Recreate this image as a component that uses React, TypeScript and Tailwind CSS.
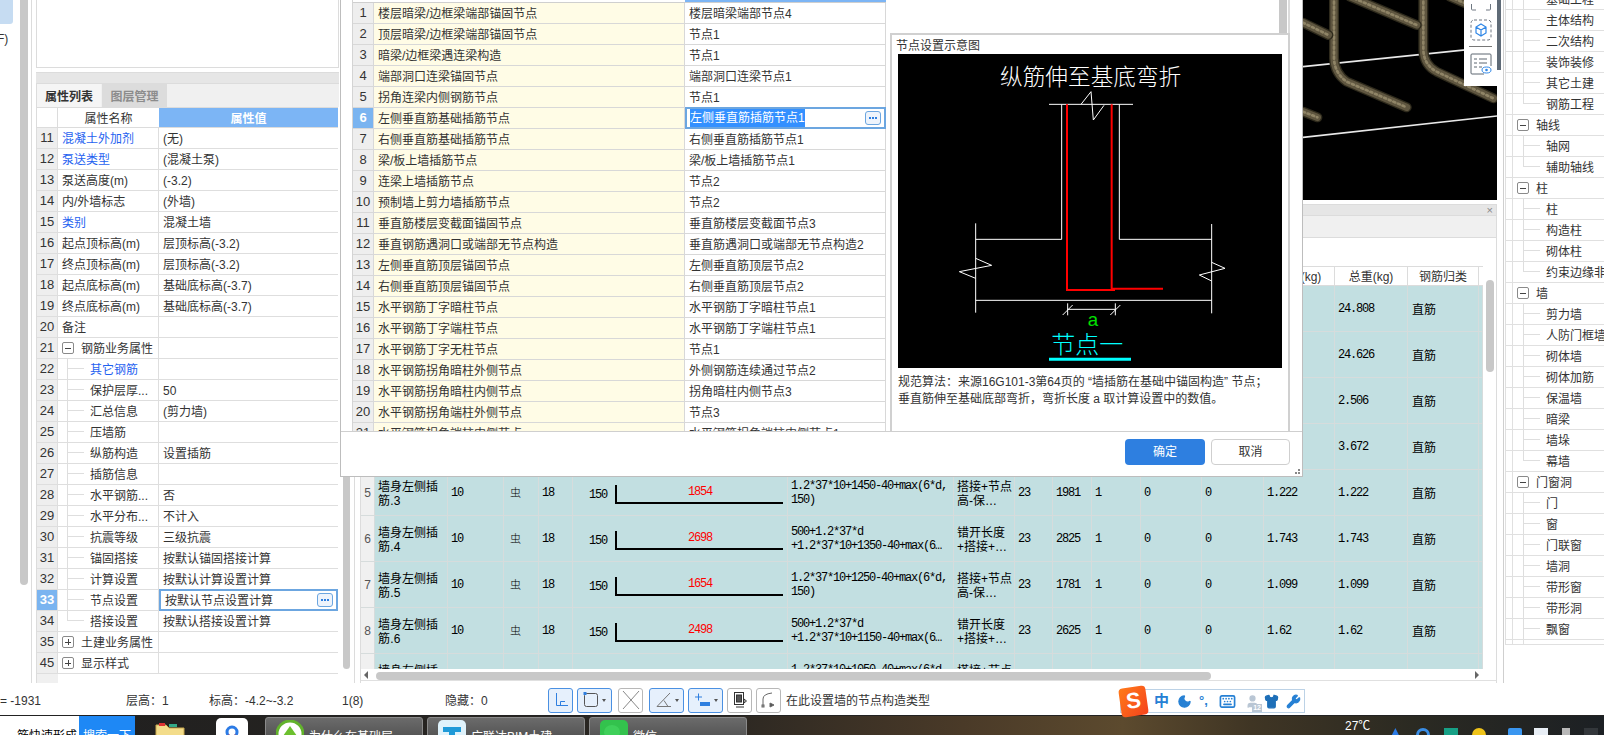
import { Moon, Keyboard, Shirt, Wrench, User } from 'lucide-react'

const monoClass = "[font-family:'Liberation_Mono','Noto_Sans_CJK_SC',monospace] text-[12px] tracking-[-1.2px]"

const properties = [
  { n: 11, name: '混凝土外加剂', value: '(无)', blue: true },
  { n: 12, name: '泵送类型', value: '(混凝土泵)', blue: true },
  { n: 13, name: '泵送高度(m)', value: '(-3.2)' },
  { n: 14, name: '内/外墙标志', value: '(外墙)' },
  { n: 15, name: '类别', value: '混凝土墙', blue: true },
  { n: 16, name: '起点顶标高(m)', value: '层顶标高(-3.2)' },
  { n: 17, name: '终点顶标高(m)', value: '层顶标高(-3.2)' },
  { n: 18, name: '起点底标高(m)', value: '基础底标高(-3.7)' },
  { n: 19, name: '终点底标高(m)', value: '基础底标高(-3.7)' },
  { n: 20, name: '备注', value: '' },
  { n: 21, name: '钢筋业务属性', value: '', section: '-' },
  { n: 22, name: '其它钢筋', value: '', child: true, blue: true },
  { n: 23, name: '保护层厚...', value: '50', child: true },
  { n: 24, name: '汇总信息', value: '(剪力墙)', child: true },
  { n: 25, name: '压墙筋', value: '', child: true },
  { n: 26, name: '纵筋构造', value: '设置插筋', child: true },
  { n: 27, name: '插筋信息', value: '', child: true },
  { n: 28, name: '水平钢筋...', value: '否', child: true },
  { n: 29, name: '水平分布...', value: '不计入', child: true },
  { n: 30, name: '抗震等级', value: '三级抗震', child: true },
  { n: 31, name: '锚固搭接', value: '按默认锚固搭接计算', child: true },
  { n: 32, name: '计算设置', value: '按默认计算设置计算', child: true },
  { n: 33, name: '节点设置', value: '按默认节点设置计算', child: true, selected: true },
  { n: 34, name: '搭接设置', value: '按默认搭接设置计算', child: true, last: true },
  { n: 35, name: '土建业务属性', value: '', section: '+' },
  { n: 45, name: '显示样式', value: '', section: '+' },
]

const nodes = [
  ['楼层暗梁/边框梁端部锚固节点', '楼层暗梁端部节点4'],
  ['顶层暗梁/边框梁端部锚固节点', '节点1'],
  ['暗梁/边框梁遇连梁构造', '节点1'],
  ['端部洞口连梁锚固节点', '端部洞口连梁节点1'],
  ['拐角连梁内侧钢筋节点', '节点1'],
  ['左侧垂直筋基础插筋节点', '左侧垂直筋插筋节点1'],
  ['右侧垂直筋基础插筋节点', '右侧垂直筋插筋节点1'],
  ['梁/板上墙插筋节点', '梁/板上墙插筋节点1'],
  ['连梁上墙插筋节点', '节点2'],
  ['预制墙上剪力墙插筋节点', '节点2'],
  ['垂直筋楼层变截面锚固节点', '垂直筋楼层变截面节点3'],
  ['垂直钢筋遇洞口或端部无节点构造', '垂直筋遇洞口或端部无节点构造2'],
  ['左侧垂直筋顶层锚固节点', '左侧垂直筋顶层节点2'],
  ['右侧垂直筋顶层锚固节点', '右侧垂直筋顶层节点2'],
  ['水平钢筋丁字暗柱节点', '水平钢筋丁字暗柱节点1'],
  ['水平钢筋丁字端柱节点', '水平钢筋丁字端柱节点1'],
  ['水平钢筋丁字无柱节点', '节点1'],
  ['水平钢筋拐角暗柱外侧节点', '外侧钢筋连续通过节点2'],
  ['水平钢筋拐角暗柱内侧节点', '拐角暗柱内侧节点3'],
  ['水平钢筋拐角端柱外侧节点', '节点3'],
  ['水平钢筋拐角端柱内侧节点', '水平钢筋拐角端柱内侧节点1'],
]

const rebarRows = [
  { n: 1, weight: '24.808' },
  { n: 2, weight: '24.626' },
  { n: 3, weight: '2.506' },
  { n: 4, weight: '3.672' },
  { n: 5, name: '筋.3', shape: '1854', f1: '1.2*37*10+1450-40+max(6*d,', f2: '150)', d1: '搭接+节点', d2: '高-保…', len: '1981', weight: '1.222' },
  { n: 6, name: '筋.4', shape: '2698', f1: '500+1.2*37*d', f2: '+1.2*37*10+1350-40+max(6…', d1: '错开长度', d2: '+搭接+…', len: '2825', weight: '1.743' },
  { n: 7, name: '筋.5', shape: '1654', f1: '1.2*37*10+1250-40+max(6*d,', f2: '150)', d1: '搭接+节点', d2: '高-保…', len: '1781', weight: '1.099' },
  { n: 8, name: '筋.6', shape: '2498', f1: '500+1.2*37*d', f2: '+1.2*37*10+1150-40+max(6…', d1: '错开长度', d2: '+搭接+…', len: '2625', weight: '1.62' },
  { n: 9, name: '筋.7', shape: '1454', f1: '1.2*37*10+1050-40+max(6*d,', f2: '150)', d1: '搭接+节点', d2: '高-保…', len: '1581', weight: '0.976' },
]

const tree = [
  { label: '基础工程' },
  { label: '主体结构' },
  { label: '二次结构' },
  { label: '装饰装修' },
  { label: '其它土建' },
  { label: '钢筋工程', last: true },
  { label: '轴线', section: true },
  { label: '轴网' },
  { label: '辅助轴线', last: true },
  { label: '柱', section: true },
  { label: '柱' },
  { label: '构造柱' },
  { label: '砌体柱' },
  { label: '约束边缘非阴影区', last: true },
  { label: '墙', section: true },
  { label: '剪力墙' },
  { label: '人防门框墙' },
  { label: '砌体墙' },
  { label: '砌体加筋' },
  { label: '保温墙' },
  { label: '暗梁' },
  { label: '墙垛' },
  { label: '幕墙', last: true },
  { label: '门窗洞', section: true },
  { label: '门' },
  { label: '窗' },
  { label: '门联窗' },
  { label: '墙洞' },
  { label: '带形窗' },
  { label: '带形洞' },
  { label: '飘窗' },
]

const gridCols =
  'grid grid-cols-[14px_73px_56px_35px_34px_215px_166px_61px_38px_39px_49px_61px_62px_71px_73px_71px_4px]'

function Connector({ last, className }: { last?: boolean; className: string }) {
  return (
    <span className={`flex flex-col self-stretch shrink-0 ${className}`}>
      <span className="h-[10px] border-l border-b border-[#dedede]" />
      <span className={`flex-1 ${last ? '' : 'border-l border-[#dedede]'}`} />
    </span>
  )
}

function ToggleBox({ sign }: { sign: string }) {
  return (
    <span className="w-[12px] h-[12px] shrink-0 rounded-[2px] border border-[#8a8a8a] bg-white flex items-center justify-center relative">
      <span className="w-[6px] h-px bg-[#444]" />
      {sign === '+' && <span className="absolute w-px h-[6px] bg-[#444]" />}
    </span>
  )
}

function MoreButton() {
  return (
    <span className="w-[16px] h-[14px] rounded-[3px] border border-[#6ca6e0] bg-[#eef4fc] flex items-center justify-center gap-px shrink-0">
      <span className="w-[2px] h-[2px] bg-[#2e7fe0]" />
      <span className="w-[2px] h-[2px] bg-[#2e7fe0]" />
      <span className="w-[2px] h-[2px] bg-[#2e7fe0]" />
    </span>
  )
}

function PropertyPanel() {
  return (
    <div className="w-[303px] shrink-0 flex flex-col">
      <div className="h-[68px] border border-t-0 border-[#dcdcdc] bg-white" />
      <div className="mt-[4px] h-[12px] bg-[#e6e6e6] border-y border-[#dcdcdc]" />
      <div className="h-[23px] bg-[#f0f0f0] border-l border-[#dcdcdc] flex items-end text-[12px]">
        <span className="w-[64px] h-[23px] pt-[2px] bg-[#f5f5f5] font-bold text-[#333] flex items-center justify-center">属性列表</span>
        <span className="ml-px w-[65px] h-[23px] pt-[2px] bg-[#dcdcdc] font-bold text-[#8c8c8c] flex items-center justify-center">图层管理</span>
      </div>
      <div className="flex-1 flex flex-col border-l border-[#dcdcdc] text-[12px] text-[#333]">
        <div className="flex h-[21px] w-[301px] border-b border-t border-[#dcdcdc]">
          <span className="w-[21px] border-r border-[#dcdcdc]" />
          <span className="w-[101px] pt-[2px] flex items-center justify-center">属性名称</span>
          <span className="flex-1 pt-[2px] bg-[#7cb5f5] text-white font-bold flex items-center justify-center">属性值</span>
        </div>
        {properties.map((p) => (
          <div key={p.n} className="flex h-[21px] w-[301px] border-b border-[#dedede] items-center">
            <span
              className={`w-[21px] h-full border-r border-[#dedede] flex items-center justify-center text-[13px] ${
                p.selected ? 'bg-[#7ab4f0] text-white font-bold' : 'bg-[#eeeeee]'
              }`}
            >
              {p.n}
            </span>
            <span className="w-[101px] h-full border-r border-[#dedede] flex items-center overflow-hidden whitespace-nowrap">
              {p.section && (
                <span className="ml-[4px] mr-[7px] flex">
                  <ToggleBox sign={p.section} />
                </span>
              )}
              {p.child && <Connector last={p.last} className="ml-[9px] mr-[6px] w-[17px]" />}
              <span className={`pt-[2px] ${p.blue ? 'text-[#1f62f0]' : ''} ${!p.section && !p.child ? 'pl-[4px]' : ''}`}>{p.name}</span>
            </span>
            {p.selected ? (
              <span className="flex-1 h-[22px] border-2 border-[#6ca6e0] flex items-center pl-[4px] pr-[3px] justify-between bg-white">
                <span className="pt-[2px]">{p.value}</span>
                <MoreButton />
              </span>
            ) : (
              <span className="flex-1 pl-[4px] pt-[2px] whitespace-nowrap">{p.value}</span>
            )}
          </div>
        ))}
        <div className="flex-1 w-[21px] bg-[#f0f0f0]" />
      </div>
    </div>
  )
}

function RebarView() {
  const bars = [
    'M222 -10 L222 175 Q224 220 260 245 L440 322',
    'M490 -10 L490 150 Q492 195 530 215 L700 295',
    'M270 -10 L470 75',
    'M129 68 L205 105',
    'M129 335 L172 352',
    'M570 -10 L620 12',
  ]
  return (
    <div className="relative h-[200px] bg-black flex justify-end overflow-hidden">
      <svg width="194" height="200" viewBox="129 0 582 600" className="shrink-0">
        <line x1="129" y1="200" x2="711" y2="140" stroke="#e8e8e8" strokeWidth="5" />
        <line x1="129" y1="412" x2="711" y2="348" stroke="#e8e8e8" strokeWidth="5" />
        {bars.map((d) => (
          <g key={d} fill="none" strokeLinecap="round">
            <path d={d} stroke="#2e2a1c" strokeWidth="30" />
            <path d={d} stroke="#5f5640" strokeWidth="22" />
            <path d={d} stroke="#8f8466" strokeWidth="8" strokeDasharray="6 9" />
          </g>
        ))}
      </svg>
      <div className="absolute right-0 top-0 w-[33px] h-[86px] bg-white flex flex-col items-center">
        <svg width="22" height="13" viewBox="0 0 22 13" fill="none" stroke="#6e7781" strokeWidth="1">
          <path d="M1.5 4V9a1 1 0 0 0 1 1H6M16 10h3.5a1 1 0 0 0 1-1V4" />
        </svg>
        <svg width="22" height="22" viewBox="0 0 22 22" fill="none" className="mt-[6px]">
          <rect x="1" y="1" width="20" height="20" rx="3" stroke="#6e7781" strokeDasharray="3 2" />
          <path d="M11 5l5 3v6l-5 3-5-3V8zM6 8l5 3 5-3M11 11v6" stroke="#2e86e6" strokeWidth="1.2" />
        </svg>
        <span className="w-[23px] h-px bg-[#777] mt-[5px]" />
        <svg width="22" height="22" viewBox="0 0 22 22" fill="none" className="mt-[6px]">
          <path d="M14 21H2a1 1 0 0 1-1-1V2a1 1 0 0 1 1-1h18a1 1 0 0 1 1 1v11" stroke="#5c6670" />
          <path d="M4 6h3M9 6h8M4 10h3M9 10h8M4 14h3M9 14h3" stroke="#5c6670" />
          <ellipse cx="16.5" cy="17" rx="4.5" ry="3" stroke="#2e86e6" />
          <circle cx="16.5" cy="17" r="1.3" fill="#2e86e6" />
        </svg>
      </div>
    </div>
  )
}

function RebarTable() {
  const headers = ['', '', '', '', '', '', '', '', '', '', '', '', '', '单重(kg)', '总重(kg)', '钢筋归类']
  const cell = 'border-r border-[#d6dcdc] overflow-hidden whitespace-nowrap'
  return (
    <div className="w-[1122px] shrink-0">
      <div className={`${gridCols} h-[20px] bg-white border-y border-[#dcdcdc] text-[12px] text-[#333]`}>
        {headers.map((h, i) => (
          <span key={i} className="border-r border-[#dcdcdc] pt-[2px] flex items-center justify-center overflow-hidden whitespace-nowrap">
            {h}
          </span>
        ))}
      </div>
      <div className="h-[383px] overflow-hidden text-black text-[12px] leading-[14px]">
        {rebarRows.map((r) => (
          <div key={r.n} className={`${gridCols} h-[46px] bg-[#c2dfe1] border-b border-[#d6dcdc] shrink-0`}>
            <span className={`${cell} bg-[#f0f0f0] flex items-center justify-center text-[#555]`}>{r.name && r.n}</span>
            <span className={`${cell} flex flex-col justify-center pl-[3px] pt-[2px]`}>
              {r.name && (
                <>
                  <span>墙身左侧插</span>
                  <span className="tracking-[0.2px]">{r.name}</span>
                </>
              )}
            </span>
            <span className={`${cell} ${monoClass} flex items-center pl-[3px]`}>{r.name && '10'}</span>
            <span className={`${cell} flex items-center pl-[6px] text-[11px] font-light`}>{r.name && '虫'}</span>
            <span className={`${cell} ${monoClass} flex items-center pl-[3px]`}>{r.name && '18'}</span>
            <span className={`${cell} flex items-center pl-[16px]`}>
              {r.name && (
                <>
                  <span className={`${monoClass} mt-[4px]`}>150</span>
                  <span className="ml-[8px] mt-[4px] w-[168px] h-[19px] border-l-2 border-b-2 border-black">
                    <span className={`${monoClass} block text-center text-[#ff0000]`}>{r.shape}</span>
                  </span>
                </>
              )}
            </span>
            <span className={`${cell} ${monoClass} flex flex-col justify-center pl-[3px]`}>
              <span>{r.f1}</span>
              <span>{r.f2}</span>
            </span>
            <span className={`${cell} flex flex-col justify-center pl-[3px] pt-[2px]`}>
              <span>{r.d1}</span>
              <span>{r.d2}</span>
            </span>
            <span className={`${cell} ${monoClass} flex items-center pl-[3px]`}>{r.name && '23'}</span>
            <span className={`${cell} ${monoClass} flex items-center pl-[3px]`}>{r.len}</span>
            <span className={`${cell} ${monoClass} flex items-center pl-[3px]`}>{r.name && '1'}</span>
            <span className={`${cell} ${monoClass} flex items-center pl-[3px]`}>{r.name && '0'}</span>
            <span className={`${cell} ${monoClass} flex items-center pl-[3px]`}>{r.name && '0'}</span>
            <span className={`${cell} ${monoClass} flex items-center pl-[3px]`}>{r.name && r.weight}</span>
            <span className={`${cell} ${monoClass} flex items-center pl-[3px]`}>{r.weight}</span>
            <span className={`${cell} flex items-center pl-[4px] pt-[2px]`}>直筋</span>
            <span className={cell} />
          </div>
        ))}
      </div>
    </div>
  )
}

function CenterPanel() {
  return (
    <div className="w-[1148px] shrink-0 border-l border-[#dcdcdc] pl-[5px] flex flex-col">
      <div className="flex">
        <div className="w-[1137px]">
          <RebarView />
        </div>
        <div className="w-[4px] h-[70px] bg-[#5f6b77]" />
      </div>
      <div className="mt-[4px] w-[1137px] flex-1 border-r border-l border-[#dcdcdc] flex flex-col overflow-hidden">
        <div className="h-[12px] shrink-0 bg-[#e6e6e6] border-y border-[#dcdcdc] flex justify-end items-center pr-[3px] text-[#888] text-[11px]">×</div>
        <div className="h-[22px] shrink-0 bg-[#f0f0f0] border-b border-[#dcdcdc]" />
        <div className="h-[28px] shrink-0 bg-white" />
        <div className="flex">
          <RebarTable />
          <div className="ml-[3px] mt-[14px] w-[8px] h-[92px] rounded-[4px] bg-[#c8c8c8]" />
        </div>
        <div className="h-[11px] shrink-0 w-[1122px] bg-white flex items-center pl-[3px] pr-[4px]">
          <span className="w-0 h-0 border-y-[4px] border-y-transparent border-r-[4px] border-r-[#666]" />
          <span className="ml-[8px] mt-[3px] w-[835px] h-[8px] rounded-[4px] bg-[#c8c8c8]" />
          <span className="ml-auto w-0 h-0 border-y-[4px] border-y-transparent border-l-[4px] border-l-[#666]" />
        </div>
        <div className="flex-1 border-t border-[#e0e0e0]" />
      </div>
    </div>
  )
}

function TreePanel() {
  return (
    <div className="w-[103px] shrink-0 ml-px border-l border-[#cfcfcf] pl-[1px] overflow-hidden text-[12px] text-[#333]">
      <div className="-mt-[11px]">
        {tree.map((t, i) => (
          <div key={i} className="h-[21px] flex items-center border-b border-[#e0e0e0] whitespace-nowrap">
            <span className="w-[8px] self-stretch border-x border-[#e0e0e0] shrink-0" />
            {t.section ? (
              <>
                <span className="ml-[4px] mr-[7px] flex">
                  <ToggleBox sign="-" />
                </span>
                <span className="pt-[2px]">{t.label}</span>
              </>
            ) : (
              <>
                <Connector last={t.last} className="ml-[10px] mr-[6px] w-[17px]" />
                <span className="pt-[2px]">{t.label}</span>
              </>
            )}
          </div>
        ))}
        <div className="h-[5px] flex border-b border-[#e0e0e0]">
          <span className="w-[8px] border-x border-[#e0e0e0]" />
          <span className="ml-[10px] border-l border-[#e0e0e0]" />
        </div>
      </div>
    </div>
  )
}

function NodeDiagram() {
  return (
    <svg width="384" height="314" viewBox="54 102 1152 942" className="block bg-black" fill="none">
      <text x="632" y="195" textAnchor="middle" fontSize="68" fontWeight="300" fill="#fff" stroke="none">纵筋伸至基底弯折</text>
      <g stroke="#fff" strokeWidth="3">
        <path d="M507 253H759" />
        <path d="M545 253V658H287" />
        <path d="M718 253V658H995" />
        <path d="M287 610V878M995 612V880M287 841H995" />
        <path d="M603 253L633 215L640 300L672 256" />
        <path d="M287 715L335 736L238 755L287 775" />
        <path d="M995 727L1035 745L958 765L995 783" />
        <path d="M563 868H706M563 850V886M706 850V886M548 885L578 855M691 885L721 855" />
      </g>
      <path d="M561 253V810H705" stroke="#ff0000" strokeWidth="6" />
      <path d="M695 253V806H849" stroke="#ff0000" strokeWidth="6" />
      <text x="639" y="918" textAnchor="middle" fontSize="56" fontWeight="300" fill="#00e000" stroke="none">a</text>
      <text x="622" y="998" textAnchor="middle" fontSize="72" fontWeight="300" fill="#00ffff" stroke="none">节点一</text>
      <path d="M507 1018H753" stroke="#00ffff" strokeWidth="9" />
    </svg>
  )
}

function NodeDialog() {
  return (
    <div className="absolute left-[340px] top-0 w-[963px] h-[477px] bg-white border-x border-b border-[#bdbdbd] flex flex-col text-[12px] text-[#333]">
      <div className="h-[432px] flex pl-[11px] border-b border-[#cfcfcf]">
        <div className="w-[534px] shrink-0 overflow-hidden border-l border-[#d4d4d4]">
          <div className="flex h-[3px] border-b border-[#cfcfcf]">
            <span className="w-[332px]" />
            <span className="flex-1 bg-[#7cb5f5]" />
          </div>
          {nodes.map(([name, value], i) => {
            const active = i === 5
            return (
              <div key={i} className="flex h-[21px] border-b border-[#d8d8d8] items-center">
                <span
                  className={`w-[21px] h-full border-r border-[#d8d8d8] flex items-center justify-center text-[13px] ${
                    active ? 'bg-[#7ab4f0] text-white font-bold' : 'bg-[#eeeeee]'
                  }`}
                >
                  {i + 1}
                </span>
                <span className="w-[311px] h-full pt-[2px] bg-[#fffce6] border-r border-[#d8d8d8] pl-[4px] flex items-center">{name}</span>
                {active ? (
                  <span className="flex-1 h-[22px] border-2 border-[#6ca6e0] pl-[3px] pr-[3px] flex items-center justify-between">
                    <span className="bg-[#3390ff] text-white">{value}</span>
                    <MoreButton />
                  </span>
                ) : (
                  <span className="flex-1 h-full pt-[2px] border-r border-[#d8d8d8] pl-[4px] flex items-center">{value}</span>
                )}
              </div>
            )
          })}
        </div>
        <div className="ml-[4px] w-[400px] shrink-0 flex flex-col">
          <div className="h-[33px] flex justify-end">
            <span className="w-[8px] h-full bg-[#c8c8c8]" />
            <span className="ml-[1px] w-[2px] h-full bg-[#dcdcdc]" />
          </div>
          <div className="flex-1 border-2 border-b-0 border-[#d0d0d0] pl-[6px] flex flex-col">
            <div className="h-[19px] -ml-[2px] leading-[22px]">节点设置示意图</div>
            <NodeDiagram />
            <p className="mt-[6px] leading-[17px] whitespace-nowrap">
              规范算法：来源16G101-3第64页的 “墙插筋在基础中锚固构造” 节点；
              <br />
              垂直筋伸至基础底部弯折，弯折长度 a 取计算设置中的数值。
            </p>
          </div>
        </div>
      </div>
      <div className="relative flex justify-end gap-[6px] pr-[12px] pt-[7px]">
        <button className="w-[80px] h-[26px] rounded-[4px] bg-[#2e7fe0] text-white">确定</button>
        <button className="w-[79px] h-[26px] rounded-[4px] border border-[#cfcfcf] bg-white">取消</button>
        <span className="absolute right-[2px] bottom-[-9px] grid grid-cols-3 gap-px w-[8px]">
          <span />
          <span />
          <span className="h-[2px] w-[2px] bg-[#888]" />
          <span />
          <span className="h-[2px] w-[2px] bg-[#888]" />
          <span className="h-[2px] w-[2px] bg-[#888]" />
        </span>
      </div>
    </div>
  )
}

function ToolButton({ active, wide, className = '', children }: { active?: boolean; wide?: boolean; className?: string; children: React.ReactNode }) {
  return (
    <span
      className={`h-[25px] ${wide ? 'w-[35px]' : 'w-[25px]'} shrink-0 rounded-[3px] border flex items-center justify-center gap-[3px] ${
        active ? 'bg-[#e6f0fc] border-[#4a90e2]' : 'bg-white border-[#b8b8b8]'
      } ${className}`}
    >
      {children}
      {wide && <span className="w-0 h-0 border-x-[2px] border-x-transparent border-t-[3px] border-t-[#555]" />}
    </span>
  )
}

function StatusBar() {
  return (
    <div className="h-[32px] shrink-0 bg-white flex items-center pt-[2px] text-[12px] text-[#333]">
      <span className="w-[126px] shrink-0 pt-[2px]">= -1931</span>
      <span className="w-[83px] shrink-0 pt-[2px]">层高：1</span>
      <span className="w-[133px] shrink-0 pt-[2px]">标高：-4.2~-3.2</span>
      <span className="w-[103px] shrink-0 pt-[2px]">1(8)</span>
      <span className="w-[103px] shrink-0 pt-[2px]">隐藏：0</span>
      <div className="flex gap-[4px] shrink-0">
        <ToolButton active>
          <svg width="16" height="16" viewBox="0 0 16 16" fill="none" stroke="#2e7fe0">
            <path d="M3.5 1V13.5H15M7.5 13.5V9.5H12" />
          </svg>
        </ToolButton>
        <ToolButton active wide>
          <svg width="16" height="18" viewBox="0 0 16 18" fill="none" stroke="#555">
            <rect x="1.5" y="2.5" width="13" height="13" rx="2" />
            <rect x="0.5" y="1" width="3" height="3" fill="#2e7fe0" stroke="none" />
          </svg>
        </ToolButton>
        <ToolButton className="ml-[2px]">
          <svg width="18" height="20" viewBox="0 0 18 20" fill="none" stroke="#888">
            <path d="M1 1L17 19M17 1L1 19" />
          </svg>
        </ToolButton>
        <ToolButton active wide className="ml-[2px]">
          <svg width="17" height="17" viewBox="0 0 17 17" fill="none" stroke="#777">
            <path d="M15 1L2 14.5H16M9 8.5L13 14.5" />
          </svg>
        </ToolButton>
        <ToolButton active wide>
          <svg width="17" height="17" viewBox="0 0 17 17" fill="none">
            <path d="M1 5H8M4.5 1.5V8.5" stroke="#2e7fe0" />
            <rect x="6" y="10" width="10" height="4" fill="#2e7fe0" />
          </svg>
        </ToolButton>
        <ToolButton>
          <svg width="16" height="18" viewBox="0 0 16 18" fill="none" stroke="#333">
            <rect x="2.5" y="1.5" width="9" height="12" />
            <rect x="4.5" y="4" width="5" height="7" fill="#555" />
            <path d="M4 16H12M12 8l2.5 2-2.5 2z" />
          </svg>
        </ToolButton>
        <ToolButton>
          <svg width="16" height="18" viewBox="0 0 16 18" fill="none" stroke="#666">
            <path d="M2 16V8Q2 3 11 2" />
            <rect x="1" y="14" width="2" height="2" />
            <path d="M9 12l4 2-4 2z" fill="#555" />
          </svg>
        </ToolButton>
      </div>
      <span className="ml-[5px] pt-[2px] whitespace-nowrap">在此设置墙的节点构造类型</span>
    </div>
  )
}

function Taskbar() {
  const windows = [
    {
      label: '为什么在基础层…',
      icon: (
        <svg width="28" height="28" viewBox="0 0 28 28">
          <circle cx="14" cy="14" r="13" fill="#fff" stroke="#62b32c" strokeWidth="3" />
          <path d="M14 6l7 10H7z" fill="#6cc02e" />
        </svg>
      ),
    },
    {
      label: '广联达BIM土建…',
      icon: (
        <svg width="28" height="28" viewBox="0 0 28 28">
          <rect width="28" height="28" rx="5" fill="#dff2fb" />
          <path d="M5 7H23V12H17V22H11V12H5z" fill="#1f9ad8" />
        </svg>
      ),
    },
    {
      label: '微信',
      icon: (
        <svg width="28" height="28" viewBox="0 0 28 28">
          <rect width="28" height="28" rx="5" fill="#33c24d" />
          <ellipse cx="12" cy="12" rx="8" ry="7" fill="#3fd05a" />
          <ellipse cx="20" cy="23" rx="7" ry="6" fill="#f2f2f2" />
        </svg>
      ),
    },
  ]
  return (
    <div className="h-[20px] shrink-0 overflow-hidden flex items-start border-t border-[#222] bg-[linear-gradient(90deg,#1f1f1f_0%,#2b2722_45%,#4a3a28_60%,#5c4a2e_70%,#3f3524_78%,#2b2a22_88%,#1c2024_100%)] text-[12px]">
      <span className="w-[79px] h-[40px] bg-white text-black pt-[13px] pl-[0px] leading-[14px] whitespace-nowrap overflow-hidden shrink-0 text-right pr-[2px]">筋快速形成</span>
      <span className="w-[56px] h-[40px] bg-[#1e88f5] text-white pt-[13px] leading-[14px] text-center shrink-0">搜索一下</span>
      <div className="ml-[20px] w-[30px] mt-[6px] shrink-0">
        <svg width="30" height="24" viewBox="0 0 30 24">
          <path d="M1 3h10l3 3h15v18H1z" fill="#f3dc8a" stroke="#c9a94e" />
          <rect x="4" y="1" width="6" height="3" fill="#d33" />
          <rect x="14" y="2" width="8" height="3" fill="#3a8" />
        </svg>
      </div>
      <div className="ml-[31px] w-[32px] h-[32px] mt-[2px] rounded-[5px] bg-white shrink-0 flex justify-center pt-[6px]">
        <svg width="20" height="20" viewBox="0 0 20 20" fill="none">
          <circle cx="10" cy="8" r="5" stroke="#2c7be5" strokeWidth="3" />
          <path d="M3 18L8 11M17 18L12 11" stroke="#e5484d" strokeWidth="3" />
        </svg>
      </div>
      <div className="ml-[17px] flex gap-[4px] shrink-0">
        {windows.map((w) => (
          <div key={w.label} className="w-[158px] h-[40px] mt-px rounded-t-[3px] border border-[#8a8a8a] bg-[linear-gradient(180deg,#6b6b6b,#3c3c3c)] text-white flex items-start pl-[10px] pt-[2px] gap-[5px]">
            {w.icon}
            <span className="mt-[10px] leading-[14px] whitespace-nowrap">{w.label}</span>
          </div>
        ))}
      </div>
      <span className="ml-[598px] mt-[3px] text-[12px] leading-[14px] text-white shrink-0 whitespace-nowrap">27℃</span>
      <div className="ml-[18px] mt-[12px] flex gap-[14px] shrink-0">
        <span className="w-[14px] h-[14px] bg-[#2c7be5] [clip-path:polygon(50%_0,100%_100%,0_100%)]" />
        <span className="w-[14px] h-[14px] rounded-full border-[3px] border-[#3a8ee6]" />
        <span className="w-[14px] h-[14px] bg-[#17a086]" />
        <span className="w-[14px] h-[14px] rounded-full bg-[#f0c419]" />
        <span className="ml-[8px] w-[14px] h-[14px] rounded-[2px] bg-[#3a96f0]" />
        <span className="ml-[-2px] w-[14px] h-[14px] bg-[#e8eef5]" />
        <span className="w-[8px] h-[14px] bg-[#b8b8b8]" />
        <span className="w-[14px] h-[14px] bg-[#33373b]" />
      </div>
    </div>
  )
}

function ImeBar() {
  return (
    <div className="absolute left-[1120px] top-[689px] flex items-center h-[24px] w-[185px] border border-[#bcd2e6] bg-white">
      <span className="-ml-px w-[27px] h-[29px] -rotate-[8deg] rounded-[4px] bg-[linear-gradient(135deg,#ff7a1a,#f5431c)] text-white font-bold text-[22px] leading-[28px] text-center shrink-0">S</span>
      <span className="ml-[7px] text-[15px] font-bold text-[#2680d4]">中</span>
      <Moon size={15} className="ml-[8px] text-[#2680d4]" fill="#2680d4" />
      <span className="ml-[7px] w-[12px] text-[13px] font-bold text-[#2680d4] leading-[14px]">°,</span>
      <Keyboard size={17} className="ml-[8px] text-[#2680d4]" strokeWidth={2.4} />
      <span className="ml-[9px] relative flex">
        <User size={15} className="text-[#b9c6d4]" fill="#b9c6d4" />
        <span className="absolute -right-[2px] -bottom-[3px] text-[7px] leading-[8px] font-bold text-white bg-[#b9c6d4] px-px">12</span>
      </span>
      <Shirt size={15} className="ml-[4px] text-[#1e6fb8]" fill="#1e6fb8" />
      <Wrench size={15} className="ml-[7px] text-[#2680d4]" fill="#2680d4" />
    </div>
  )
}

export default function App() {
  return (
    <div className="relative w-[1604px] h-[735px] overflow-hidden bg-white flex flex-col [font-family:'Liberation_Sans','Noto_Sans_CJK_SC',sans-serif]">
      <div className="flex h-[683px] shrink-0 overflow-hidden">
        <div className="w-[36px] shrink-0 flex">
          <div className="w-[20px] shrink-0 overflow-hidden text-[12px] text-[#333]">
            <div className="w-[13px] h-[24px] rounded-br-[3px] bg-[#c6dcf2]" />
            <div className="mt-[6px] -ml-[7px] whitespace-nowrap">(F)</div>
          </div>
          <div className="w-[8px] h-[585px] shrink-0 rounded-b-[4px] bg-[#c8c8c8]" />
          <div className="ml-[3px] w-[5px] border-l border-[#dcdcdc]" />
        </div>
        <PropertyPanel />
        <div className="ml-[4px] mt-[400px] w-[7px] h-[269px] shrink-0 rounded-b-[4px] bg-[#c8c8c8]" />
        <div className="w-[4px] shrink-0" />
        <CenterPanel />
        <TreePanel />
      </div>
      <StatusBar />
      <Taskbar />
      <NodeDialog />
      <ImeBar />
    </div>
  )
}
